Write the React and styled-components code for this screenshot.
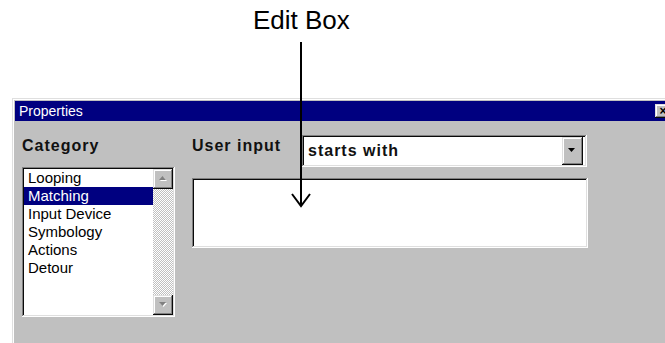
import React from "react";
import styled, { createGlobalStyle } from "styled-components";

const GlobalStyle = createGlobalStyle`
  html, body {
    margin: 0;
    padding: 0;
    background: #ffffff;
    overflow: hidden;
  }
  body {
    font-family: "Liberation Sans", Arial, sans-serif;
  }
`;

// win95 bevels
const raised = `
  box-shadow: inset -1px -1px #0a0a0a, inset 1px 1px #dfdfdf,
    inset -2px -2px #808080, inset 2px 2px #ffffff;
`;
const sunken = `
  box-shadow: inset -1px -1px #ffffff, inset 1px 1px #808080,
    inset -2px -2px #dfdfdf, inset 2px 2px #0a0a0a;
`;

const Page = styled.div`
  position: relative;
  width: 665px;
  height: 343px;
  overflow: hidden;
`;

const Caption = styled.div`
  height: 98px;
  box-sizing: border-box;
  padding: 5px 0 0 253px;
  font-size: 26px;
  line-height: 30px;
  color: #000;
`;

const Window = styled.div`
  margin-left: 12px;
  width: 664px;
  height: 250px;
  box-sizing: border-box;
  padding: 3px;
  background: #c0c0c0;
  ${raised}
`;

const TitleBar = styled.div`
  height: 20px;
  background: #000080;
  display: flex;
  align-items: center;
  justify-content: space-between;
  padding: 0 2px 0 4px;
`;

const Title = styled.span`
  color: #fff;
  font-size: 14px;
  line-height: 16px;
`;

const CloseButton = styled.div`
  width: 16px;
  height: 14px;
  background: #c0c0c0;
  ${raised}
  display: flex;
  align-items: center;
  justify-content: center;
  font-weight: bold;
  font-size: 12px;
  line-height: 12px;
  color: #000;
`;

const Body = styled.div`
  display: flex;
  gap: 17px;
  padding: 14px 0 0 7px;
`;

const Column = styled.div`
  display: flex;
  flex-direction: column;
`;

const Label = styled.div`
  margin-top: 2px;
  font-size: 16px;
  line-height: 18px;
  font-weight: bold;
  letter-spacing: 1px;
  color: #111;
  width: ${(p) => p.$width || "auto"};
  flex: 0 0 auto;
`;

const ListBox = styled.div`
  margin-top: 12px;
  width: 153px;
  height: 150px;
  box-sizing: border-box;
  padding: 2px;
  background: #fff;
  ${sunken}
  display: flex;
`;

const Items = styled.ul`
  flex: 1;
  margin: 0;
  padding: 0;
  list-style: none;
`;

const Item = styled.li`
  padding-left: 4px;
  font-size: 15px;
  line-height: 18px;
  color: ${(p) => (p.$selected ? "#fff" : "#000")};
  background: ${(p) => (p.$selected ? "#000080" : "transparent")};
`;

const ScrollBar = styled.div`
  width: 20px;
  display: flex;
  flex-direction: column;
`;

const ScrollTrack = styled.div`
  flex: 1;
  background-image: repeating-conic-gradient(#c0c0c0 0 25%, #ffffff 0 50%);
  background-size: 2px 2px;
`;

const SmallButton = styled.div`
  width: ${(p) => p.$w || 20}px;
  height: ${(p) => p.$h || 20}px;
  flex: 0 0 auto;
  background: #c0c0c0;
  ${raised}
  display: flex;
  align-items: center;
  justify-content: center;
`;

const InputRow = styled.div`
  display: flex;
  align-items: flex-start;
`;

const Combo = styled.div`
  width: 285px;
  height: 32px;
  box-sizing: border-box;
  padding: 2px 4px 2px 2px;
  background: #fff;
  ${sunken}
  display: flex;
  align-items: center;
  justify-content: space-between;
`;

const ComboText = styled.span`
  padding-left: 4px;
  font-size: 16px;
  font-weight: bold;
  letter-spacing: 1px;
  color: #111;
`;

const EditBox = styled.div`
  margin-top: 11px;
  width: 396px;
  height: 70px;
  box-sizing: border-box;
  background: #fff;
  ${sunken}
`;

const Pointer = styled.svg`
  position: absolute;
  left: 290px;
  top: 42px;
`;

const Arrow = ({ dir, disabled }) => {
  const pts = dir === "up" ? "0,4 3.5,0 7,4" : "0,0 3.5,4 7,0";
  return (
    <svg width="9" height="6" viewBox="0 0 9 6">
      {disabled && <polygon points={pts} fill="#fff" transform="translate(1,1)" />}
      <polygon points={pts} fill={disabled ? "#808080" : "#000"} />
    </svg>
  );
};

const categories = ["Looping", "Matching", "Input Device", "Symbology", "Actions", "Detour"];

export default function App() {
  return (
    <Page>
      <GlobalStyle />
      <Caption>Edit Box</Caption>
      <Window>
        <TitleBar>
          <Title>Properties</Title>
          <CloseButton>×</CloseButton>
        </TitleBar>
        <Body>
          <Column>
            <Label>Category</Label>
            <ListBox>
              <Items>
                {categories.map((c) => (
                  <Item key={c} $selected={c === "Matching"}>
                    {c}
                  </Item>
                ))}
              </Items>
              <ScrollBar>
                <SmallButton>
                  <Arrow dir="up" disabled />
                </SmallButton>
                <ScrollTrack />
                <SmallButton>
                  <Arrow dir="down" disabled />
                </SmallButton>
              </ScrollBar>
            </ListBox>
          </Column>
          <Column>
            <InputRow>
              <Label $width="110px">User input</Label>
              <Combo>
                <ComboText>starts with</ComboText>
                <SmallButton $w={21} $h={28}>
                  <Arrow dir="down" />
                </SmallButton>
              </Combo>
            </InputRow>
            <EditBox />
          </Column>
        </Body>
      </Window>
      <Pointer width="22" height="166" viewBox="0 0 22 166">
        <line x1="11" y1="0" x2="11" y2="164" stroke="#000" strokeWidth="2" />
        <polyline points="2,152 11,164 20,152" fill="none" stroke="#000" strokeWidth="2" />
      </Pointer>
    </Page>
  );
}
